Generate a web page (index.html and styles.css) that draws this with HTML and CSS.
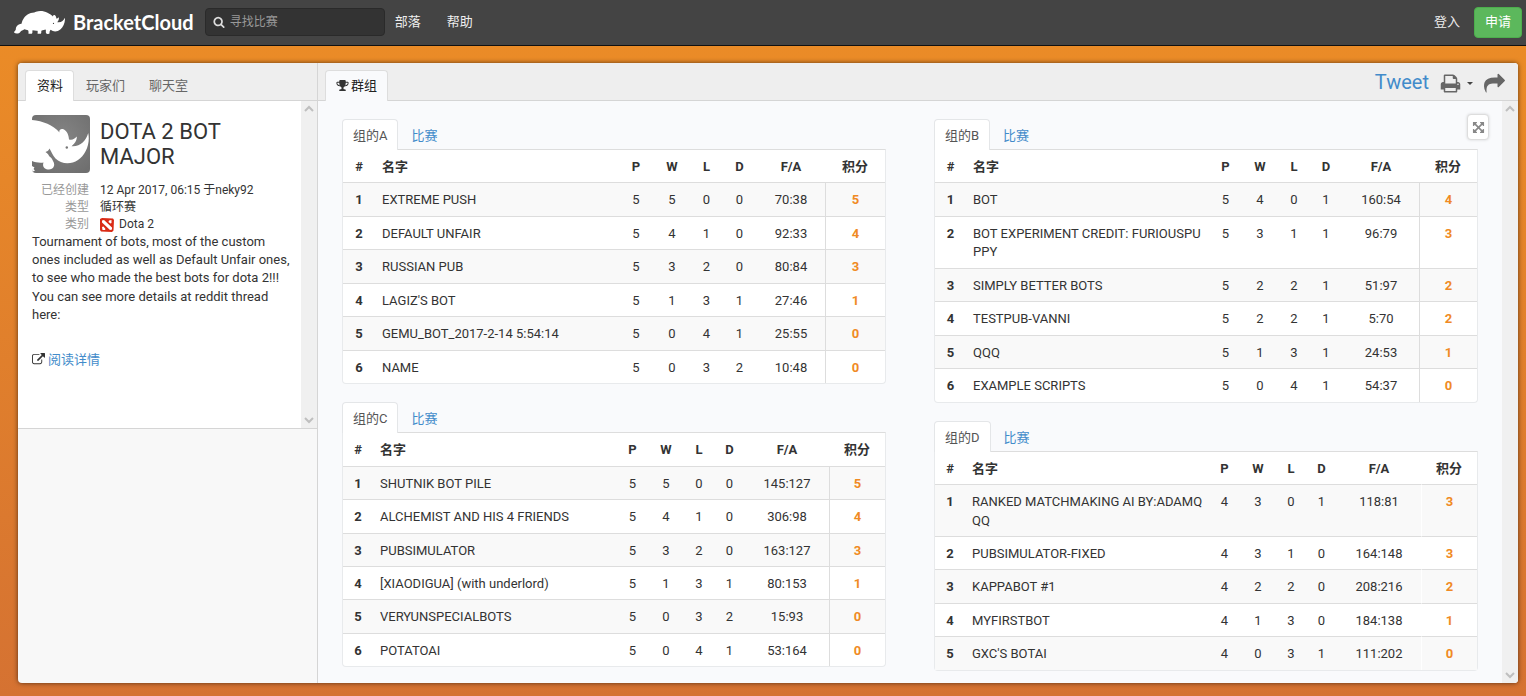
FILE: index.html
```html
<!DOCTYPE html>
<html lang="zh-CN">
<head>
<meta charset="utf-8">
<meta name="viewport" content="width=device-width, initial-scale=1">
<title>BracketCloud</title>
<link rel="stylesheet" href="styles.css">
</head>
<body>
<header class="topbar">
  <a class="brand" href="#">
    <svg class="brand-mark" viewBox="0 0 51 23" aria-hidden="true">
      <path fill="#fff" d="M0 21.500C.3 20 1.500 19.800 1.800 18.500C2 15.500 3.500 13.300 7.500 12.800C8.500 8.500 11 4.500 15 2.800C17.500 1.500 19.500 2 22 .8C25.500-.4 30 0 33.500 1.800C36 3 37.500 4 39 5.500C38.900 4.300 40 3.500 41 4.300C42 5.200 42.300 6.300 42.300 7.600C43.300 7.600 44 7 44.800 6.300C45.200 8.500 44.200 10 43.300 11.200C47 12 49.500 9.800 51 6.800C51.200 11.500 49.500 15.800 46.300 18.600C43.500 20.800 39.500 21.300 36.800 18.800C36 19.300 35.500 20.300 35.500 22.500C34.500 23.300 32.500 23.200 32 22C31.500 20.600 32.300 19.400 31.500 18.400C30.500 18.800 29.200 19.300 27.700 19.500C26.800 20.500 27.800 21.600 26.800 22.700H23.600C23.500 21.500 24 20.700 23.400 19.700C21.500 19.800 20 19.600 18.600 19.300C18 20.500 19 21.700 17.800 22.700H14.500C14.400 21.500 14.800 20.300 14 19.300C12.600 18.800 11.500 18.600 10.400 18.300C8.800 19.300 7.300 19.700 6.300 21C5 22.800 1.700 23.200 0 21.500Z"/>
      <circle cx="39.500" cy="12.400" r=".6" fill="#444"/>
    </svg>
    <span class="brand-name">BracketCloud</span>
  </a>
  <label class="search">
    <svg class="search-icon" viewBox="0 0 1792 1792" aria-hidden="true"><path d="M1216 832q0-185-131.500-316.500t-316.500-131.500-316.500 131.500-131.500 316.500 131.500 316.500 316.500 131.500 316.500-131.500 131.500-316.500zm512 832q0 52-38 90t-90 38q-54 0-90-38l-343-342q-179 124-399 124-143 0-273.500-55.500t-225-150-150-225-55.500-273.500 55.500-273.500 150-225 225-150 273.500-55.500 273.500 55.500 225 150 150 225 55.500 273.500q0 220-124 399l343 343q37 37 37 90z"/></svg>
    <input class="search-input" type="text" placeholder="寻找比赛" aria-label="寻找比赛">
  </label>
  <nav class="topnav">
    <a href="#">部落</a>
    <a href="#">帮助</a>
  </nav>
  <div class="account">
    <a class="login" href="#">登入</a>
    <button class="signup" type="button">申请</button>
  </div>
</header>

<main class="panel">
  <aside class="side">
    <nav class="tabs">
      <a class="tab tab-active" href="#">资料</a>
      <a class="tab" href="#">玩家们</a>
      <a class="tab" href="#">聊天室</a>
    </nav>
    <div class="profile">
      <div class="profile-body">
        <div class="profile-head">
          <svg class="avatar" viewBox="0 0 58 58" aria-hidden="true">
            <defs><radialGradient id="avatar-bg" cx="50%" cy="40%" r="70%"><stop offset="0" stop-color="#858585"/><stop offset="1" stop-color="#6f6f6f"/></radialGradient></defs>
            <rect width="58" height="58" fill="url(#avatar-bg)"/>
            <path fill="#fff" d="M0 5C11 6 21 10 27.500 17.500C26.600 14.800 29 13.300 31.500 14.300C35 16 36.800 20 37 24.500C40.500 25.500 42.500 24 44.800 21.600C45 26 42.500 28.800 39.500 31.200C48 32 54 26 56.200 18C58.500 29 53.500 40 46 45C38.500 50 29 49 23.500 43.500C20.500 40.500 19.500 36.500 17.500 33.500C16.500 36 15 36.500 13.500 37C16 38.800 16.600 40 17.500 41.500C19.500 42.500 20.300 44.500 21 46C23.500 49.500 22 54.500 17 54.500C12.500 54.500 10 51.500 11.500 47.500C8 48 3 47.500 0 46Z"/>
            <path fill="#fff" d="M0 51L2.500 52.500L1.500 54L3 55.500L0 57Z"/>
            <circle cx="34.800" cy="32.500" r="1.200" fill="#777"/>
          </svg>
          <h1 class="title">DOTA 2 BOT MAJOR</h1>
        </div>
        <dl class="meta">
          <dt>已经创建</dt><dd>12 Apr 2017, 06:15 于neky92</dd>
          <dt>类型</dt><dd>循环赛</dd>
          <dt>类别</dt>
          <dd class="game">
            <svg class="game-icon" viewBox="0 0 14 14" aria-hidden="true"><path fill="#d92b16" d="M0 1L2 0L13 .5L14 2L13.500 12.500L12 14L1 13.500L0 12Z"/><path fill="#fff" d="M2 2.500L4 2L12 9.500V11.500L10 12L2 4.500ZM9 2.500L11.500 2V5L10.500 5.500L8.500 4ZM2 9L3.500 8.500L5.500 11L5 12L2.500 12Z"/></svg>
            Dota 2
          </dd>
        </dl>
        <p class="about">Tournament of bots, most of the custom ones included as well as Default Unfair ones, to see who made the best bots for dota 2!!! You can see more details at reddit thread here:</p>
        <a class="more" href="#">
          <svg class="more-icon" viewBox="0 0 1792 1792" aria-hidden="true"><path d="M1408 928v320q0 119-84.500 203.500t-203.500 84.500h-832q-119 0-203.500-84.500t-84.500-203.500v-832q0-119 84.500-203.500t203.500-84.500h704q14 0 23 9t9 23v64q0 14-9 23t-23 9h-704q-66 0-113 47t-47 113v832q0 66 47 113t113 47h832q66 0 113-47t47-113v-320q0-14 9-23t23-9h64q14 0 23 9t9 23zm384-864v512q0 26-19 45t-45 19-45-19l-176-176-652 652q-10 10-23 10t-23-10l-114-114q-10-10-10-23t10-23l652-652-176-176q-19-19-19-45t19-45 45-19h512q26 0 45 19t19 45z"/></svg>
          阅读详情
        </a>
      </div>
      <div class="scrollbar" aria-hidden="true">
        <svg viewBox="0 0 16 16"><path d="M4 10l4-4 4 4"/></svg>
        <svg viewBox="0 0 16 16"><path d="M4 6l4 4 4-4"/></svg>
      </div>
    </div>
  </aside>

  <section class="stage">
    <div class="tabs">
      <a class="tab tab-active" href="#"><svg class="trophy" viewBox="0 0 1792 1792" aria-hidden="true"><path d="M522 883q-74-162-74-371h-256v96q0 78 94.500 162t235.500 113zm1078-275v-96h-256q0 209-74 371 141-29 235.500-113t94.500-162zm128-128v128q0 71-41.500 143t-112 130-173 97.500-215.500 44.500q-42 54-95 95-38 34-52.500 72.500t-14.500 89.500q0 54 30.500 91t97.500 37q75 0 133.500 45.500t58.500 114.500v64q0 14-9 23t-23 9h-832q-14 0-23-9t-9-23v-64q0-69 58.500-114.500t133.500-45.500q67 0 97.500-37t30.500-91q0-51-14.500-89.500t-52.500-72.500q-53-41-95-95-113-5-215.500-44.500t-173-97.500-112-130-41.500-143v-128q0-40 28-68t68-28h288v-96q0-66 47-113t113-47h576q66 0 113 47t47 113v96h288q40 0 68 28t28 68z"/></svg>群组</a>
      <div class="tools">
        <a class="tweet" href="#">Tweet</a>
        <button class="tool" type="button" aria-label="Print">
          <svg class="tool-icon" viewBox="0 0 1792 1792"><path d="M448 1536h896v-256h-896v256zm0-640h896v-384h-160q-40 0-68-28t-28-68v-160h-640v640zm1152 64q0-26-19-45t-45-19-45 19-19 45 19 45 45 19 45-19 19-45zm128 0v416q0 13-9.500 22.500t-22.500 9.500h-224v160q0 40-28 68t-68 28h-960q-40 0-68-28t-28-68v-160h-224q-13 0-22.500-9.500t-9.500-22.500v-416q0-79 56.500-135.500t135.500-56.500h64v-544q0-40 28-68t68-28h672q40 0 88 20t76 48l152 152q28 28 48 76t20 88v256h64q79 0 135.500 56.500t56.500 135.500z"/></svg>
          <span class="caret"></span>
        </button>
        <button class="tool" type="button" aria-label="Share">
          <svg class="tool-icon" viewBox="0 0 1792 1792"><path d="M1792 640q0 26-19 45l-512 512q-19 19-45 19t-45-19-19-45v-256h-224q-98 0-175.500 6t-154 21.500-133 42.500-105.500 69.500-80 101-48.500 138.500-17.500 181q0 55 5 123 0 6 2.500 23.500t2.500 26.500q0 15-8.500 25t-23.500 10q-16 0-28-17-7-9-13-22t-13.500-30-10.500-24q-127-285-127-451 0-199 53-333 162-403 875-403h224v-256q0-26 19-45t45-19 45 19l512 512q19 19 19 45z"/></svg>
        </button>
      </div>
    </div>
    <div class="stage-body">
      <div class="groups">
        <div class="column">
          <section class="group">
            <nav class="group-tabs"><a class="group-tab group-tab-active" href="#">组的A</a><a class="group-tab" href="#">比赛</a></nav>
            <table class="standings">
              <colgroup><col class="w32"><col><col class="w34"><col class="w38"><col class="w31"><col class="w35"><col class="w68"><col class="w60"></colgroup>
              <thead><tr><th>#</th><th>名字</th><th>P</th><th>W</th><th>L</th><th>D</th><th>F/A</th><th>积分</th></tr></thead>
              <tbody>
                <tr><th>1</th><td>EXTREME PUSH</td><td>5</td><td>5</td><td>0</td><td>0</td><td>70:38</td><td>5</td></tr>
                <tr><th>2</th><td>DEFAULT UNFAIR</td><td>5</td><td>4</td><td>1</td><td>0</td><td>92:33</td><td>4</td></tr>
                <tr><th>3</th><td>RUSSIAN PUB</td><td>5</td><td>3</td><td>2</td><td>0</td><td>80:84</td><td>3</td></tr>
                <tr><th>4</th><td>LAGIZ'S BOT</td><td>5</td><td>1</td><td>3</td><td>1</td><td>27:46</td><td>1</td></tr>
                <tr><th>5</th><td>GEMU_BOT_2017-2-14 5:54:14</td><td>5</td><td>0</td><td>4</td><td>1</td><td>25:55</td><td>0</td></tr>
                <tr><th>6</th><td>NAME</td><td>5</td><td>0</td><td>3</td><td>2</td><td>10:48</td><td>0</td></tr>
              </tbody>
            </table>
          </section>
          <section class="group">
            <nav class="group-tabs"><a class="group-tab group-tab-active" href="#">组的C</a><a class="group-tab" href="#">比赛</a></nav>
            <table class="standings">
              <colgroup><col class="w30"><col><col class="w31"><col class="w36"><col class="w30"><col class="w31"><col class="w84"><col class="w56"></colgroup>
              <thead><tr><th>#</th><th>名字</th><th>P</th><th>W</th><th>L</th><th>D</th><th>F/A</th><th>积分</th></tr></thead>
              <tbody>
                <tr><th>1</th><td>SHUTNIK BOT PILE</td><td>5</td><td>5</td><td>0</td><td>0</td><td>145:127</td><td>5</td></tr>
                <tr><th>2</th><td>ALCHEMIST AND HIS 4 FRIENDS</td><td>5</td><td>4</td><td>1</td><td>0</td><td>306:98</td><td>4</td></tr>
                <tr><th>3</th><td>PUBSIMULATOR</td><td>5</td><td>3</td><td>2</td><td>0</td><td>163:127</td><td>3</td></tr>
                <tr><th>4</th><td>[XIAODIGUA] (with underlord)</td><td>5</td><td>1</td><td>3</td><td>1</td><td>80:153</td><td>1</td></tr>
                <tr><th>5</th><td>VERYUNSPECIALBOTS</td><td>5</td><td>0</td><td>3</td><td>2</td><td>15:93</td><td>0</td></tr>
                <tr><th>6</th><td>POTATOAI</td><td>5</td><td>0</td><td>4</td><td>1</td><td>53:164</td><td>0</td></tr>
              </tbody>
            </table>
          </section>
        </div>
        <div class="column">
          <section class="group">
            <nav class="group-tabs"><a class="group-tab group-tab-active" href="#">组的B</a><a class="group-tab" href="#">比赛</a></nav>
            <table class="standings">
              <colgroup><col class="w31"><col><col class="w31"><col class="w38"><col class="w30"><col class="w34"><col class="w76"><col class="w58"></colgroup>
              <thead><tr><th>#</th><th>名字</th><th>P</th><th>W</th><th>L</th><th>D</th><th>F/A</th><th>积分</th></tr></thead>
              <tbody>
                <tr><th>1</th><td>BOT</td><td>5</td><td>4</td><td>0</td><td>1</td><td>160:54</td><td>4</td></tr>
                <tr><th>2</th><td>BOT EXPERIMENT CREDIT: FURIOUSPU<wbr>PPY</td><td>5</td><td>3</td><td>1</td><td>1</td><td>96:79</td><td>3</td></tr>
                <tr><th>3</th><td>SIMPLY BETTER BOTS</td><td>5</td><td>2</td><td>2</td><td>1</td><td>51:97</td><td>2</td></tr>
                <tr><th>4</th><td>TESTPUB-VANNI</td><td>5</td><td>2</td><td>2</td><td>1</td><td>5:70</td><td>2</td></tr>
                <tr><th>5</th><td>QQQ</td><td>5</td><td>1</td><td>3</td><td>1</td><td>24:53</td><td>1</td></tr>
                <tr><th>6</th><td>EXAMPLE SCRIPTS</td><td>5</td><td>0</td><td>4</td><td>1</td><td>54:37</td><td>0</td></tr>
              </tbody>
            </table>
          </section>
          <section class="group">
            <nav class="group-tabs"><a class="group-tab group-tab-active" href="#">组的D</a><a class="group-tab" href="#">比赛</a></nav>
            <table class="standings standings-plain">
              <colgroup><col class="w30"><col><col class="w31"><col class="w36"><col class="w30"><col class="w31"><col class="w84"><col class="w56"></colgroup>
              <thead><tr><th>#</th><th>名字</th><th>P</th><th>W</th><th>L</th><th>D</th><th>F/A</th><th>积分</th></tr></thead>
              <tbody>
                <tr><th>1</th><td>RANKED MATCHMAKING AI BY:ADAMQ<wbr>QQ</td><td>4</td><td>3</td><td>0</td><td>1</td><td>118:81</td><td>3</td></tr>
                <tr><th>2</th><td>PUBSIMULATOR-FIXED</td><td>4</td><td>3</td><td>1</td><td>0</td><td>164:148</td><td>3</td></tr>
                <tr><th>3</th><td>KAPPABOT #1</td><td>4</td><td>2</td><td>2</td><td>0</td><td>208:216</td><td>2</td></tr>
                <tr><th>4</th><td>MYFIRSTBOT</td><td>4</td><td>1</td><td>3</td><td>0</td><td>184:138</td><td>1</td></tr>
                <tr><th>5</th><td>GXC'S BOTAI</td><td>4</td><td>0</td><td>3</td><td>1</td><td>111:202</td><td>0</td></tr>
              </tbody>
            </table>
          </section>
        </div>
        <button class="expand" type="button" aria-label="Expand"><svg viewBox="0 0 1792 1792"><path d="M1411 541l-355 355 355 355 144-144q29-31 70-14 39 17 39 59v448q0 26-19 45t-45 19h-448q-42 0-59-40-17-39 14-69l144-144-355-355-355 355 144 144q31 30 14 69-17 40-59 40h-448q-26 0-45-19t-19-45v-448q0-42 40-59 39-17 69 14l144 144 355-355-355-355-144 144q-19 19-45 19-12 0-24-5-40-17-40-59v-448q0-26 19-45t45-19h448q42 0 59 40 17 39-14 69l-144 144 355 355 355-355-144-144q-31-30-14-69 17-40 59-40h448q26 0 45 19t19 45v448q0 42-39 59-13 5-25 5-26 0-45-19z"/></svg></button>
      </div>
      <div class="scrollbar" aria-hidden="true">
        <svg viewBox="0 0 16 16"><path d="M4 10l4-4 4 4"/></svg>
        <svg viewBox="0 0 16 16"><path d="M4 6l4 4 4-4"/></svg>
      </div>
    </div>
  </section>
</main>
</body>
</html>
```
FILE: styles.css
```css
* { box-sizing: border-box; }

body {
  margin: 0;
  min-height: 100vh;
  display: flex;
  flex-direction: column;
  background: linear-gradient(#ec8d26, #d57232);
  color: #333;
  font: 13px/18px Roboto, "Noto Sans CJK SC", sans-serif;
}

a { color: #428bca; text-decoration: none; }
button { font: inherit; cursor: pointer; }

/* Top bar */
.topbar {
  display: flex;
  align-items: center;
  height: 46px;
  padding: 0 4px 1px 14px;
  background: #444;
  border-bottom: 1px solid #111;
}
.brand { display: flex; align-items: center; gap: 8px; color: #fff; }
.brand-mark { width: 51px; height: 23px; }
.brand-name { font: bold 20px/24px Lato, sans-serif; }
.search {
  display: flex;
  align-items: center;
  gap: 5px;
  width: 180px;
  height: 28px;
  margin-left: 11px;
  padding: 0 7px;
  background: #333;
  border: 1px solid #2a2a2a;
  border-radius: 4px;
}
.search-icon { width: 12px; height: 12px; fill: #ddd; flex: none; }
.search-input {
  flex: 1;
  min-width: 0;
  padding: 0;
  border: 0;
  outline: 0;
  background: none;
  color: #ddd;
  font: 12px/18px Roboto, "Noto Sans CJK SC", sans-serif;
}
.search-input::placeholder { color: #999; opacity: 1; }
.topnav { display: flex; gap: 26px; margin-left: 10px; }
.topnav a, .login { color: #eee; }
.account { display: flex; align-items: center; gap: 14px; margin-left: auto; }
.signup {
  height: 31px;
  padding: 0 10px;
  color: #fff;
  background: #5cb85c;
  border: 1px solid #4cae4c;
  border-radius: 4px;
}

/* Main panel */
.panel {
  flex: 1;
  display: flex;
  margin: 17px 8px 13px 18px;
  border-radius: 4px;
  overflow: hidden;
  background: #f8f8f8;
  box-shadow: 0 0 5px rgba(0, 0, 0, .6);
}
.side {
  flex: none;
  width: 300px;
  border-right: 1px solid #d5d5d5;
}
.stage { flex: 1; min-width: 0; display: flex; flex-direction: column; background: #f9fafc; }

.tabs {
  display: flex;
  align-items: flex-end;
  height: 38px;
  padding-left: 7px;
  background: #eee;
  border-bottom: 1px solid #d5d5d5;
}
.tab {
  height: 31px;
  margin-bottom: -1px;
  padding: 6px 11px 0;
  border: 1px solid transparent;
  border-bottom: 0;
  border-radius: 4px 4px 0 0;
  color: #666;
}
.tab-active { color: #222; background: #fff; border-color: #ddd; }
.side .tab-active { padding: 6px 10px 0 11px; }
.stage .tab-active { background: #f9fafc; padding: 6px 10px 0; }
.trophy { width: 13px; height: 13px; margin-right: 2px; vertical-align: -2px; fill: #333; }

.tools { display: flex; align-items: center; gap: 11px; height: 36px; margin-left: auto; padding-right: 13px; }
.tweet { font-size: 20px; line-height: 24px; }
.tool { display: flex; align-items: center; gap: 6px; padding: 2px 0 0; border: 0; background: none; }
.tool-icon { width: 21px; height: 21px; fill: #666; }
.caret { border: 3px solid transparent; border-top-color: #444; border-bottom: 0; }

/* Side profile */
.profile { display: flex; background: #fff; border-bottom: 1px solid #d5d5d5; }
.profile-body { flex: 1; padding: 14px 8px 59px 14px; }
.profile-head { display: flex; gap: 10px; margin-bottom: 9px; }
.avatar { flex: none; width: 58px; height: 58px; border-radius: 4px; }
.title { margin: 0; padding-top: 4px; font-size: 22px; line-height: 25px; font-weight: 400; }
.meta {
  display: grid;
  grid-template-columns: 57px 1fr;
  column-gap: 11px;
  margin: 0;
  font-size: 12px;
  line-height: 17px;
}
.meta dt { color: #999; text-align: right; }
.meta dd { margin: 0; }
.game { display: flex; align-items: center; gap: 5px; }
.game-icon { width: 14px; height: 14px; }
.about { margin: 0 0 27px; line-height: 1.4; }
.more { display: flex; align-items: center; gap: 3px; }
.more-icon { width: 13px; height: 13px; fill: #333; }

.scrollbar {
  flex: none;
  display: flex;
  flex-direction: column;
  justify-content: space-between;
  width: 16px;
  background: #f0f0f0;
}
.scrollbar svg { width: 16px; height: 16px; fill: none; stroke: #bfbfbf; stroke-width: 2; }

/* Groups */
.stage-body { flex: 1; display: flex; }
.groups {
  position: relative;
  flex: 1;
  display: grid;
  grid-template-columns: 1fr 1fr;
  align-items: start;
  column-gap: 48px;
  padding: 18px 24px 12px;
}
.column { display: grid; gap: 18px; }
.group-tabs { display: flex; }
.group-tab { height: 31px; padding: 7px 12px 0; border: 1px solid transparent; border-bottom: 0; }
.group-tab-active {
  position: relative;
  z-index: 1;
  padding: 7px 10px 0;
  background: #fff;
  border-color: #e4e6e8;
  border-radius: 4px 4px 0 0;
  color: #555;
}
.standings {
  width: 100%;
  margin-top: -1px;
  table-layout: fixed;
  border-collapse: separate;
  border-spacing: 0;
  background: #fff;
  border: 1px solid #e8eaec;
  border-top-color: #ddd;
  border-radius: 0 0 4px 4px;
  line-height: 1.42;
}
.standings th, .standings td { padding: 8px 0 6px; text-align: center; vertical-align: top; }
.standings th { font-weight: 700; }
.standings th:nth-child(2), .standings td:nth-child(2) { padding-left: 7px; text-align: left; }
.standings tbody th, .standings tbody td { border-top: 1px solid #ddd; }
.standings tbody tr:nth-child(odd) { background: #f9f9f9; }
.standings td:last-child { color: #f08a24; font-weight: 700; border-left: 1px solid #ddd; }
.standings-plain td:last-child { border-left-color: #fff; }

.w30 { width: 30px; }
.w31 { width: 31px; }
.w32 { width: 32px; }
.w34 { width: 34px; }
.w35 { width: 35px; }
.w36 { width: 36px; }
.w38 { width: 38px; }
.w56 { width: 56px; }
.w58 { width: 58px; }
.w60 { width: 60px; }
.w68 { width: 68px; }
.w76 { width: 76px; }
.w84 { width: 84px; }

.expand {
  position: absolute;
  top: 13px;
  right: 13px;
  display: flex;
  width: 22px;
  height: 26px;
  align-items: center;
  justify-content: center;
  padding: 0;
  background: #fff;
  border: 1px solid #ddd;
  border-radius: 4px;
  box-shadow: 0 0 3px rgba(0, 0, 0, .15);
}
.expand svg { width: 13px; height: 13px; fill: #888; }
```
